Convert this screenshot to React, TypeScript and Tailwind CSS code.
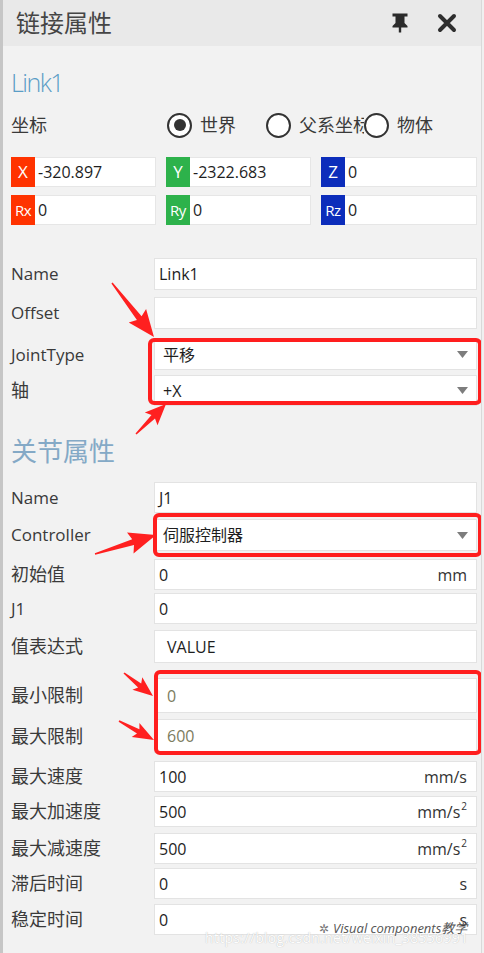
import React from "react";

type Row = {
  label: string;
  cjk?: boolean;
  value?: string;
  unit?: React.ReactNode;
  dropdown?: boolean;
  cls: string;
  valueCls?: string;
};

function arrowPoints(
  x1: number,
  y1: number,
  x2: number,
  y2: number,
  headLen: number,
  headW: number,
  w0: number,
  w1: number
) {
  const dx = x2 - x1;
  const dy = y2 - y1;
  const len = Math.sqrt(dx * dx + dy * dy);
  const ux = dx / len;
  const uy = dy / len;
  const px = -uy;
  const py = ux;
  const bx = x2 - ux * headLen;
  const by = y2 - uy * headLen;
  const pts: [number, number][] = [
    [x1 + (px * w0) / 2, y1 + (py * w0) / 2],
    [bx + (px * w1) / 2, by + (py * w1) / 2],
    [bx + px * headW - ux * 3, by + py * headW - uy * 3],
    [x2, y2],
    [bx - px * headW - ux * 3, by - py * headW - uy * 3],
    [bx - (px * w1) / 2, by - (py * w1) / 2],
    [x1 - (px * w0) / 2, y1 - (py * w0) / 2],
  ];
  return pts.map((p) => `${p[0].toFixed(1)},${p[1].toFixed(1)}`).join(" ");
}

const sup2 = (
  <span className="inline-flex items-start">
    mm/s<span className="text-[10px] leading-none relative top-[1px] ml-[1px]">2</span>
  </span>
);

const rows1: Row[] = [
  { label: "Name", value: "Link1", cls: "mt-[33px] h-[32px]" },
  { label: "Offset", value: "", cls: "mt-[7px] h-[32px]" },
  { label: "JointType", value: "平移", dropdown: true, cls: "mt-[10px] h-[31px]" },
  { label: "轴", cjk: true, value: "+X", dropdown: true, cls: "mt-[5px] h-[31px]" },
];

const rows2: Row[] = [
  { label: "Name", value: "J1", cls: "mt-[13px] h-[31px]" },
  { label: "Controller", value: "伺服控制器", dropdown: true, cls: "mt-[6px] h-[32px]" },
  { label: "初始值", cjk: true, value: "0", unit: "mm", cls: "mt-[8px] h-[31px]" },
  { label: "J1", value: "0", cls: "mt-[3px] h-[31px]" },
  { label: "值表达式", cjk: true, value: "VALUE", cls: "mt-[6px] h-[33px]", valueCls: "pl-[12px]" },
  { label: "最小限制", cjk: true, value: "0", cls: "mt-[15px] h-[35px]", valueCls: "pl-[12px] text-[#7c7c5e]" },
  { label: "最大限制", cjk: true, value: "600", cls: "mt-[6px] h-[34px]", valueCls: "pl-[12px] text-[#7c7c5e]" },
  { label: "最大速度", cjk: true, value: "100", unit: "mm/s", cls: "mt-[8px] h-[31px]" },
  { label: "最大加速度", cjk: true, value: "500", unit: sup2, cls: "mt-[4px] h-[31px]" },
  { label: "最大减速度", cjk: true, value: "500", unit: sup2, cls: "mt-[6px] h-[31px]" },
  { label: "滞后时间", cjk: true, value: "0", unit: "s", cls: "mt-[4px] h-[31px]" },
  { label: "稳定时间", cjk: true, value: "0", unit: "s", cls: "mt-[5px] h-[31px]" },
];

function FieldRow({ r }: { r: Row }) {
  return (
    <div className={`flex items-center ${r.cls}`}>
      <div
        className={`w-[143px] shrink-0 text-[#3a3a3a] ${
          r.cjk ? "text-[18px]" : "text-[17px]"
        }`}
      >
        {r.label}
      </div>
      <div
        className={`flex-1 h-full bg-white border border-[#e3e3e3] flex items-center text-[16px] text-[#1e1e1e] ${
          r.dropdown ? "pl-[8px]" : r.valueCls ? "" : "pl-[4px]"
        } ${r.valueCls ?? ""} pr-[9px]`}
      >
        <span className="flex-1">{r.value}</span>
        {r.unit && <span className="text-[#333]">{r.unit}</span>}
        {r.dropdown && (
          <svg width="11" height="7" viewBox="0 0 11 7" className="mr-[-1px]">
            <path d="M0 0h11L5.5 7z" fill="#7d7d7d" />
          </svg>
        )}
      </div>
    </div>
  );
}

function Coord({
  label,
  value,
  color,
  cls,
  small,
}: {
  label: string;
  value: string;
  color: string;
  cls: string;
  small?: boolean;
}) {
  return (
    <div className={`flex h-full ${cls}`}>
      <div
        className={`w-[24px] shrink-0 flex items-center justify-center text-white ${color} ${
          small ? "text-[15px] tracking-[-0.5px]" : "text-[17px]"
        }`}
      >
        {label}
      </div>
      <div className="flex-1 bg-white border border-[#e6e6e6] border-l-0 flex items-center pl-[3px] text-[16px] text-[#1e1e1e]">
        {value}
      </div>
    </div>
  );
}

function Radio({ checked, label, cls }: { checked?: boolean; label: string; cls: string }) {
  return (
    <div className={`flex items-center overflow-hidden whitespace-nowrap ${cls}`}>
      <div className="w-[25px] h-[25px] shrink-0 rounded-full border-2 border-[#333] flex items-center justify-center bg-white">
        {checked && <div className="w-[12px] h-[12px] rounded-full bg-[#333]" />}
      </div>
      <span className="ml-[8px] text-[18px] text-[#3a3a3a]">{label}</span>
    </div>
  );
}

export default function App() {
  const arrows = [
    arrowPoints(112, 283, 154, 337, 24, 11, 1.5, 6),
    arrowPoints(136, 434, 166, 404, 18, 9, 1.5, 5),
    arrowPoints(95, 554, 156, 535, 24, 11, 1.5, 6),
    arrowPoints(124, 673, 153, 696, 17, 8, 1.5, 5),
    arrowPoints(119, 721, 154, 740, 18, 8, 1.5, 5),
  ];
  return (
    <div className="w-[484px] h-[953px] bg-[#f0f0f0] font-['Open_Sans','Noto_Sans_CJK_SC',sans-serif]">
      <div className="relative w-[482px] h-[953px] bg-[#f2f2f2] border-l-[3px] border-l-[#c6c6c6] border-r border-r-[#d9d9d9] overflow-hidden">
        <header className="h-[46px] bg-[#e9e9e9] flex items-center pl-[13px] pr-[24px]">
          <span className="text-[24px] leading-none text-[#454545]">链接属性</span>
          <div className="ml-auto flex items-center gap-[29px]">
            <svg width="16" height="20" viewBox="0 0 16 20">
              <path
                d="M0.5 0.5h15v3h-3v6.5l3 3v1.5h-15v-1.5l3-3v-6.5h-3z"
                fill="#2b2b2b"
              />
              <rect x="6.8" y="14" width="2.4" height="5.5" fill="#2b2b2b" />
            </svg>
            <svg width="20" height="20" viewBox="0 0 20 20">
              <path d="M3 3L17 17M17 3L3 17" stroke="#2e2e2e" strokeWidth="4" strokeLinecap="round" />
            </svg>
          </div>
        </header>

        <div className="pl-[8px] pr-[4px]">
          <div className="mt-[19px] h-[34px] flex items-center text-[25px] font-light tracking-[-1.5px] text-[#5a9dc6] leading-none">
            Link1
          </div>

          <div className="mt-[13px] h-[26px] flex items-center">
            <div className="w-[156px] text-[18px] text-[#3a3a3a]">坐标</div>
            <Radio checked label="世界" cls="w-[99px]" />
            <Radio label="父系坐标" cls="w-[98px]" />
            <Radio label="物体" cls="w-[90px]" />
          </div>

          <div className="mt-[19px] h-[30px] flex gap-[10px]">
            <Coord label="X" value="-320.897" color="bg-[#ff3300]" cls="w-[145px]" />
            <Coord label="Y" value="-2322.683" color="bg-[#2db24b]" cls="w-[145px]" />
            <Coord label="Z" value="0" color="bg-[#0c2dbb]" cls="flex-1" />
          </div>
          <div className="mt-[8px] h-[30px] flex gap-[10px]">
            <Coord label="Rx" value="0" color="bg-[#ff3300]" cls="w-[145px]" small />
            <Coord label="Ry" value="0" color="bg-[#2db24b]" cls="w-[145px]" small />
            <Coord label="Rz" value="0" color="bg-[#0c2dbb]" cls="flex-1" small />
          </div>

          {rows1.map((r, i) => (
            <FieldRow key={"a" + i} r={r} />
          ))}

          <div className="mt-[27px] h-[36px] flex items-center text-[26px] text-[#84a9c6] leading-none">
            关节属性
          </div>

          {rows2.map((r, i) => (
            <FieldRow key={"b" + i} r={r} />
          ))}
        </div>

        {/* annotation boxes */}
        <div className="absolute left-[145px] top-[338px] w-[334px] h-[67px] border-[4px] border-[#ff1e1e] rounded-[6px]" />
        <div className="absolute left-[150px] top-[513px] w-[329px] h-[44px] border-[4px] border-[#ff1e1e] rounded-[6px]" />
        <div className="absolute left-[151px] top-[670px] w-[328px] h-[85px] border-[4px] border-[#ff1e1e] rounded-[6px]" />

        <svg className="absolute left-[-3px] top-0 pointer-events-none" width="484" height="953" viewBox="0 0 484 953">
          {arrows.map((p, i) => (
            <polygon key={i} points={p} fill="#ff2020" />
          ))}
        </svg>

        {/* watermark */}
        <div className="absolute left-[202px] top-[927px] text-[14px] text-[#ffffff] opacity-90 whitespace-nowrap tracking-[0.3px] [text-shadow:0_0_1px_#aaa]">
          https://blog.csdn.net/weixin_38556991
        </div>
        <div className="absolute left-[316px] top-[919px] flex items-center gap-[4px] text-[13px] text-[#555] whitespace-nowrap">
          <span className="text-[12px] text-[#777]">✲</span>
          <span className="italic">Visual components教学</span>
        </div>
      </div>
    </div>
  );
}
